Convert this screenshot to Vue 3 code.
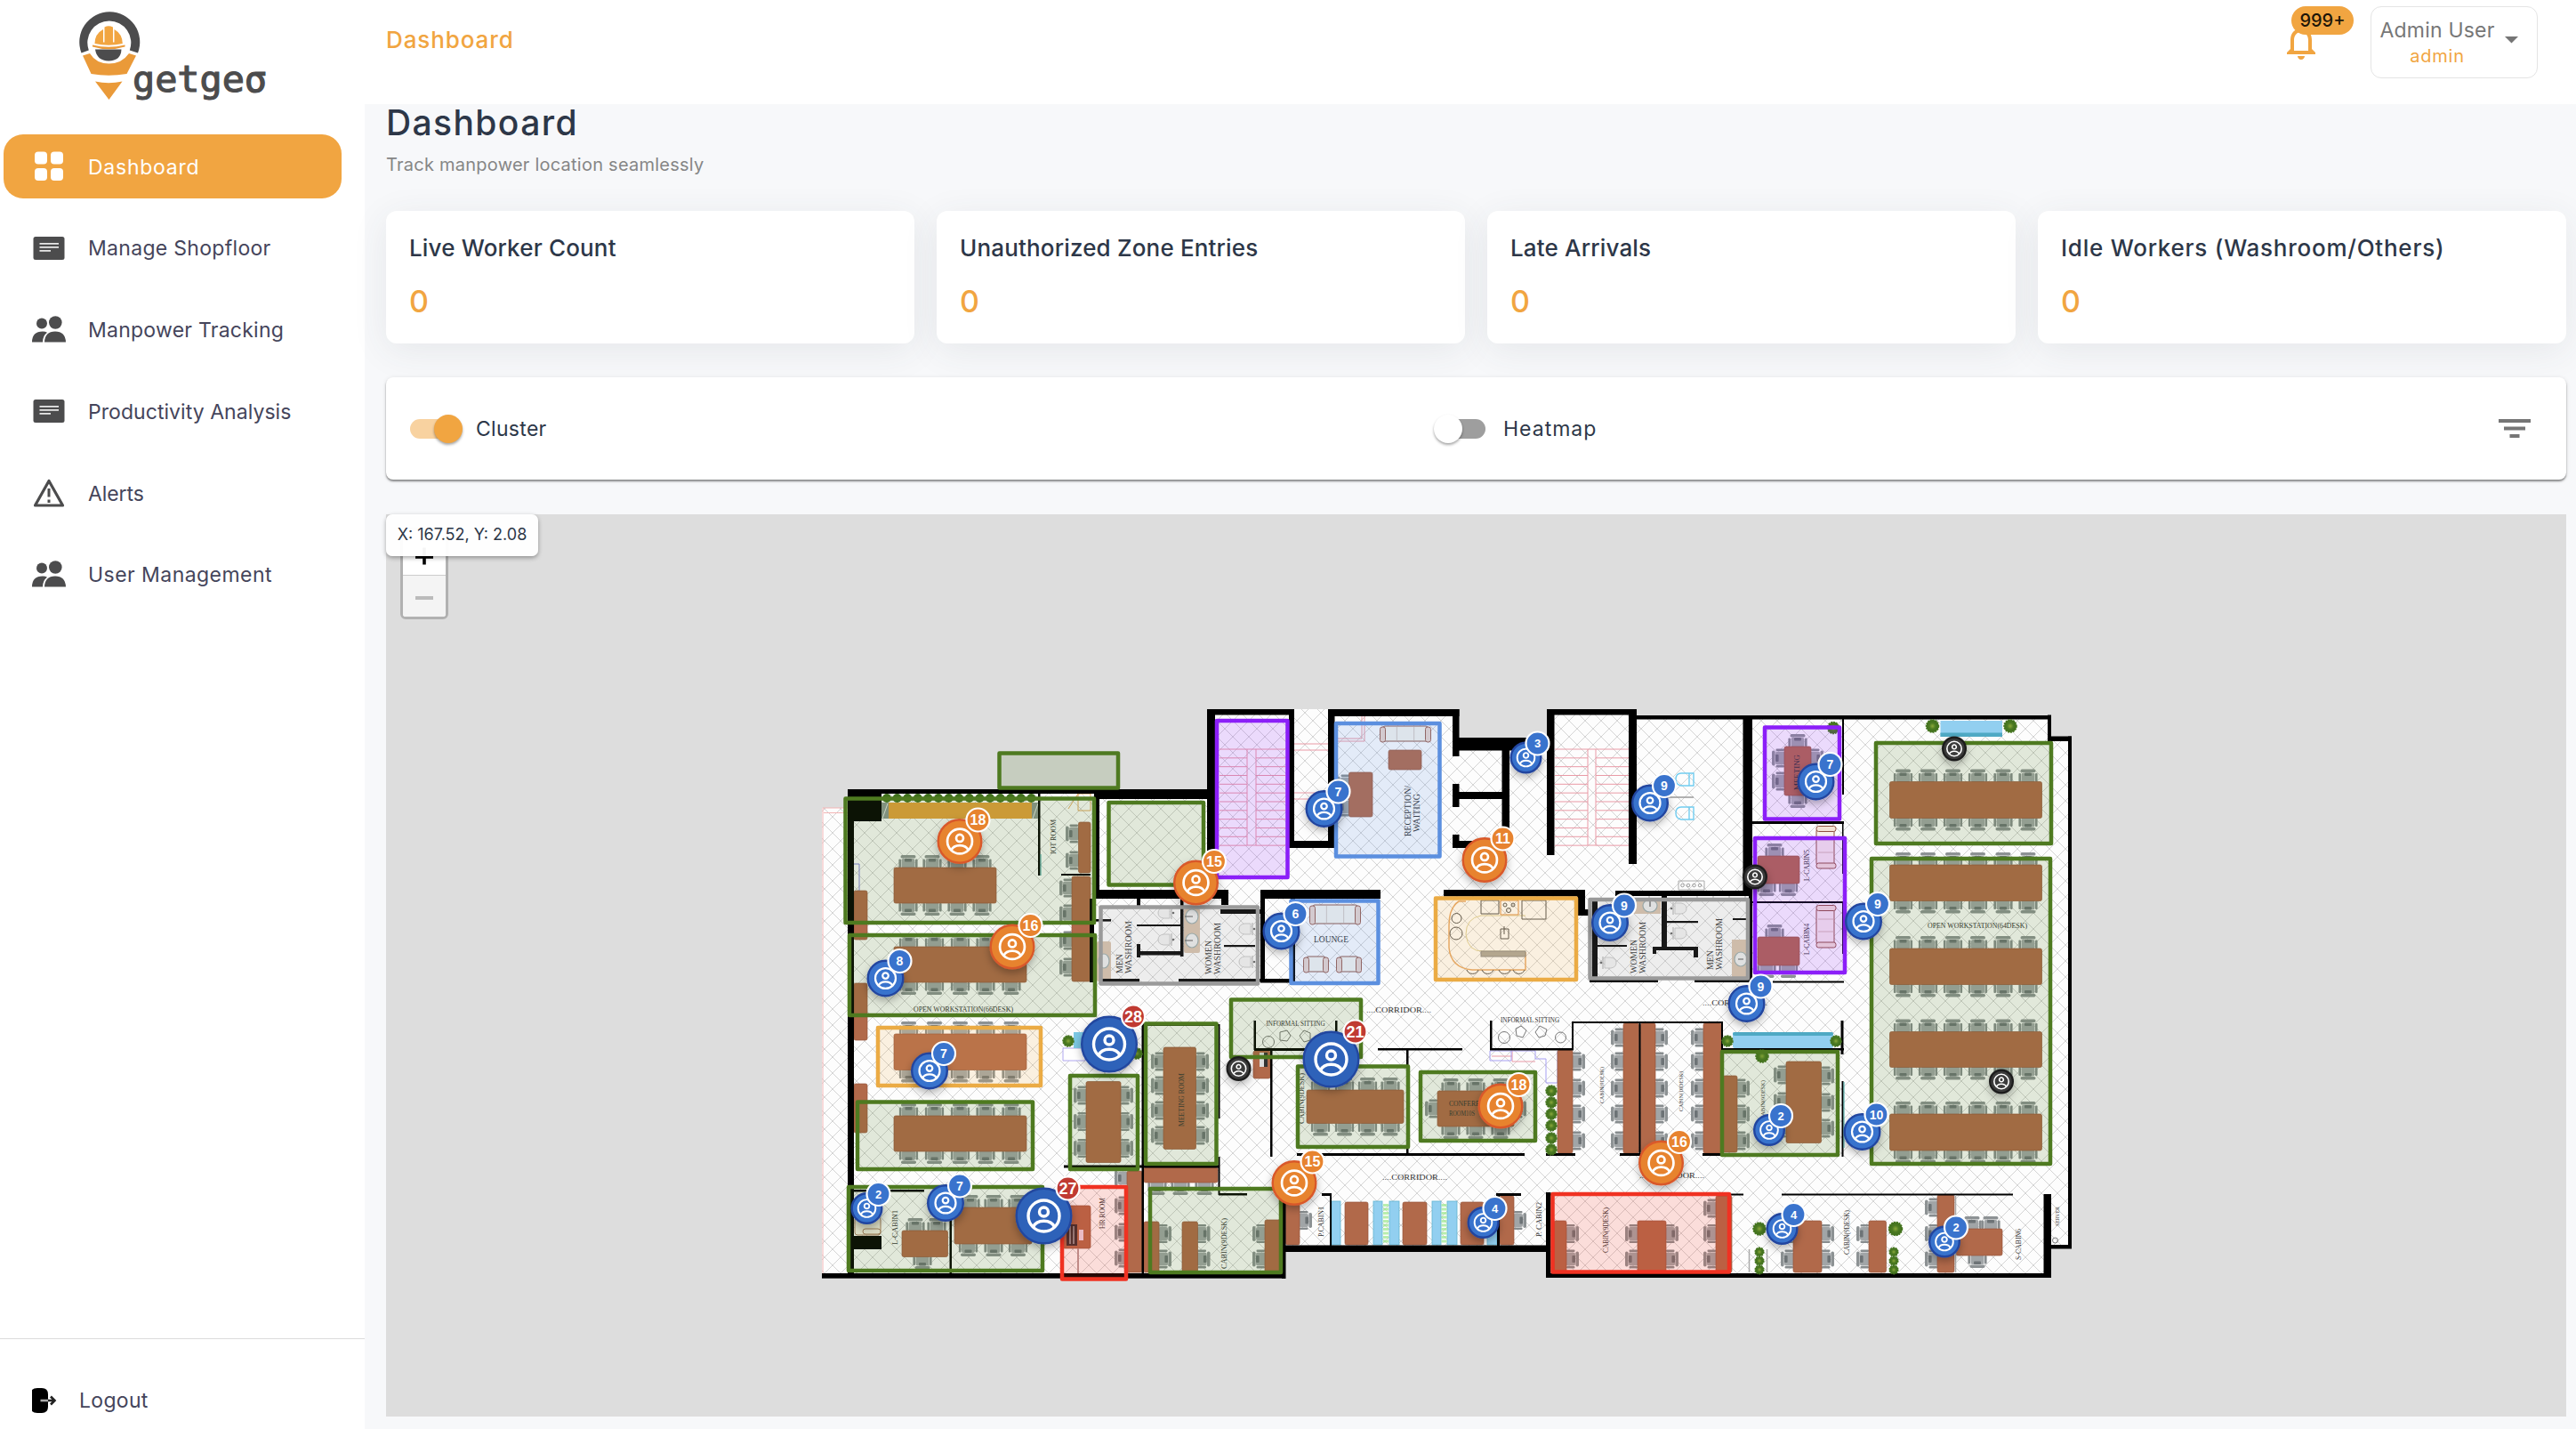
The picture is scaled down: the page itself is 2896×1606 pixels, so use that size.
<script setup>
const navItems = [
  { label: 'Dashboard', icon: 'grid', tracking: 0.75, active: true },
  { label: 'Manage Shopfloor', icon: 'note', tracking: 0.3 },
  { label: 'Manpower Tracking', icon: 'people', tracking: 0.25 },
  { label: 'Productivity Analysis', icon: 'note', tracking: 0.05 },
  { label: 'Alerts', icon: 'alert', tracking: -0.1 },
  { label: 'User Management', icon: 'people', tracking: 0.45 },
]

const stats = [
  { title: 'Live Worker Count', value: 0 },
  { title: 'Unauthorized Zone Entries', value: 0 },
  { title: 'Late Arrivals', value: 0 },
  { title: 'Idle Workers (Washroom/Others)', value: 0 },
]

// Boxes are [x1, y1, x2, y2] in map units.
const walls = [
  [953, 887, 1358, 892], [1236, 887, 1358, 898], [953, 887, 991, 923], [953, 887, 960, 1432],
  [1230, 892, 1236, 1010], [1225, 1010, 1230, 1104], [1230, 1000, 1381, 1010], [1373, 1000, 1381, 1017],
  [1357, 797, 1366, 1000], [1357, 797, 1455, 803.5], [1449, 797, 1455, 953], [1449, 945, 1501, 953],
  [1493, 797, 1500.5, 953], [1493, 797, 1640.5, 805], [1633, 797, 1640.5, 850], [1633, 829, 1740, 843.5],
  [1688.5, 829, 1697, 953], [1633, 881, 1640.5, 907], [1640, 890, 1690, 898], [1633, 938, 1640.5, 953],
  [1633, 945, 1697, 953], [1417, 1000, 1552, 1010], [1417, 1000, 1422, 1104], [1417, 1100, 1456, 1104.5],
  [1451, 1010, 1456, 1104], [1623, 1000, 1782, 1007.5], [1773, 1000, 1782, 1029], [1773, 1022, 1787, 1029],
  [1739, 797, 1747.5, 961], [1739, 797, 1840, 803.5], [1831, 797, 1840, 971], [1840, 804, 2306, 808.5],
  [1959.5, 804, 1970, 1007], [1966, 1000, 1970, 1104], [1816, 1001, 1966, 1007], [1787, 1101, 1864, 1104],
  [1905, 1101, 1969, 1104], [1790, 1010, 1796, 1098], [1868, 1007, 1874, 1066], [1858, 1064, 1909, 1068],
  [1858, 1064, 1862, 1072], [1904, 1064, 1909, 1076], [1874, 1035, 1909, 1037.2], [1948, 1032, 1966, 1034],
  [1796, 1062, 1829, 1064], [1230, 1033, 1249, 1035.6], [1278, 1039, 1327, 1041], [1327, 1010, 1330.5, 1075],
  [1278, 1069, 1330, 1073.5], [1278, 1061, 1282, 1076], [1278, 1010, 1282, 1018], [1236, 1100, 1281, 1103.5],
  [1325, 1100, 1420, 1103.5], [1372, 1022, 1417, 1027], [1376, 1062, 1411, 1064.2],
  [1970, 923, 2073, 926], [1970, 1013, 2072, 1015], [2071, 808, 2073, 893], [2071, 925, 2072.5, 982],
  [2071, 1014, 2072.5, 1072], [1993, 1102.5, 2073, 1104.5], [2302, 803.5, 2306, 832], [2302, 827.5, 2329, 833],
  [2325, 827.5, 2329, 1403], [2306, 1399, 2329, 1403.5], [2297.5, 1342, 2306, 1436], [1738, 1431, 2306, 1436],
  [1738, 1340, 1743.5, 1436], [1445, 1399.5, 1738, 1407], [1441, 1345, 1445.5, 1437], [924, 1431, 1445, 1436.7],
  [1283.5, 1150, 1286, 1432], [1196, 1309.5, 1371, 1312.5], [1369.5, 1151, 1371.5, 1257], [1289, 1151, 1371, 1153],
  [1369.5, 1300, 1371.5, 1343], [1370, 1341, 1402, 1343.5], [959, 1337, 1039, 1339.5], [1067.5, 1338, 1070, 1432],
  [1167, 892, 1169.5, 984], [1193, 982, 1226, 984], [1409.5, 1147, 1412, 1180], [1410, 1178, 1503, 1181],
  [1501, 1147, 1503.5, 1180], [1428, 1180, 1430.5, 1300], [1549, 1178, 1644, 1180.5], [1581, 1180, 1583.5, 1298],
  [1458, 1296, 1714, 1299], [1675, 1147, 1677.5, 1180], [1675, 1178, 1769, 1180.5], [1767, 1148, 1769, 1180],
  [1767, 1148, 1937, 1150], [1935, 1148, 1937, 1180], [1937, 1178, 2073, 1180.5], [2069.5, 1147, 2072.5, 1185],
  [1842.5, 1149, 1844.5, 1297], [1738, 1296, 1771, 1299], [1821, 1296, 1845, 1299], [1914, 1296, 1937, 1299],
  [2070.5, 1215, 2072.5, 1300], [1495, 1342, 1497, 1400], [1486, 1341, 1497, 1344], [1683, 1342, 1686, 1400],
  [1682, 1341, 1710, 1344], [1743, 1341.5, 1960, 1343.5], [2003, 1341.5, 2263, 1343.5], [957, 1389, 991, 1404],
]

const tables = [
  [1005, 975, 1120, 1015], [1005, 1064, 1154, 1104], [1005, 1162, 1154, 1202.5], [1005, 1254, 1154, 1294],
  [1308, 1177, 1344.5, 1291.5], [1221, 1215.5, 1260, 1306.5], [1014, 1383, 1065.5, 1412.5], [1073, 1357, 1160, 1398],
  [960, 1001, 975, 1056], [960, 1105, 975, 1169], [960, 1218, 975, 1273], [1212.5, 924, 1226, 981],
  [1205, 985, 1226, 1103], [1195, 1355, 1226, 1403], [1267, 1316, 1284, 1430], [1286, 1312, 1369, 1329],
  [1286, 1373, 1303, 1430], [1329, 1373, 1346.5, 1430], [1422, 1371, 1441, 1430], [1469, 1225, 1578, 1262.5],
  [1616, 1226, 1702, 1266], [1409, 1181, 1428, 1212], [1445.5, 1345, 1461, 1399], [1512, 1351, 1538, 1399],
  [1577, 1351, 1604, 1399], [1642, 1351, 1668, 1399], [1686, 1344, 1702, 1399], [1751, 1180, 1768, 1296],
  [1825, 1150, 1842.5, 1296], [1844.5, 1150, 1861, 1296], [1915, 1150, 1935, 1296], [1937, 1209, 1953, 1295],
  [2008, 1193, 2047.5, 1284.5], [1747, 1372, 1761, 1430], [1841, 1372, 1873, 1430], [1929, 1344, 1947, 1430],
  [2016, 1372, 2048, 1430], [2101, 1372, 2120.5, 1430], [2178, 1343, 2197, 1430], [2199, 1381, 2251, 1411],
  [1516.5, 868, 1543, 918], [1561, 843, 1598, 865], [2124.5, 878.5, 2295.5, 919.5], [2124.5, 972, 2295.5, 1012.5],
  [2124.5, 1066, 2295.5, 1106.5], [2124.5, 1159.5, 2295.5, 1199.5], [2124.5, 1252, 2295.5, 1293],
  [2006, 839, 2036, 894], [1976, 962, 2023, 993], [1976, 1053, 2023, 1085],
]

// Chair rows: seats touch the table edge and the back points away from it.
const top = (y, xs) => xs.map((x) => ({ x, y, r: 0 }))
const bottom = (y, xs) => xs.map((x) => ({ x, y, r: 180 }))
const left = (x, ys) => ys.map((y) => ({ x, y, r: 270 }))
const right = (x, ys) => ys.map((y) => ({ x, y, r: 90 }))
const five = [1021.5, 1050.5, 1079.5, 1108, 1137]
const six = [2139.5, 2167.5, 2195.5, 2223.5, 2252, 2280]
const desk5 = [1166, 1193, 1223, 1252, 1282]
const pair = [1386.5, 1415]
const chairs = [
  ...top(975, [1021, 1048, 1076, 1104]), ...bottom(1015, [1021, 1048, 1076, 1104]),
  ...[1064, 1162, 1254].flatMap((y) => top(y, five)),
  ...[1104, 1202.5, 1294].flatMap((y) => bottom(y, five)),
  ...[878.5, 972, 1066, 1159.5, 1252].flatMap((y) => top(y, six)),
  ...[919.5, 1012.5, 1106.5, 1199.5, 1293].flatMap((y) => bottom(y, six)),
  ...left(1308, [1193, 1220, 1248, 1276]), ...right(1345, [1193, 1220, 1248, 1276]),
  ...left(1221, [1231, 1260.5, 1290.5]), ...right(1260, [1231, 1260.5, 1290.5]),
  ...left(1212, [937, 967]), ...left(1205, [998, 1027, 1057, 1087]),
  ...left(1267, [1324, 1355, 1385, 1414]), ...bottom(1329, [1301, 1327, 1354]),
  ...right(1303, pair), ...right(1346.5, pair), ...left(1422, pair),
  ...top(1383, [1029, 1053]), ...bottom(1412.5, [1037]),
  ...top(1357, [1091, 1117, 1144]), ...bottom(1398, [1088.5, 1117, 1144.5]),
  ...top(1225, [1484.5, 1511.5, 1537.5, 1563]), ...bottom(1262.5, [1484.5, 1511.5, 1537.5, 1563]),
  ...top(1226, [1631, 1659, 1687]), ...bottom(1266, [1631, 1659, 1687]),
  ...left(1616, [1246]), ...right(1702, [1246]), ...right(1461, [1371.5]), ...right(1702, [1371.5]),
  ...right(1768, [1193, 1223, 1252, 1282]), ...left(1825, desk5), ...right(1861, desk5), ...left(1915, desk5),
  ...right(1953, [1223, 1252, 1282]), ...left(2008, [1208, 1238, 1268]), ...right(2048, [1209, 1239, 1268]),
  ...right(1761, pair), ...left(1841, pair), ...right(1873, pair), ...left(1929, [1358, ...pair]),
  ...left(2016, pair), ...right(2048, pair), ...left(2101, pair), ...left(2178, [1357, ...pair]),
  ...top(1381, [2217, 2238]), ...bottom(1411, [2223]),
  ...left(2006, [852, 878]), ...right(2036, [852, 878]), ...top(839, [2021]), ...bottom(894, [2021]),
  ...top(962, [1995]), ...bottom(993, [1986, 2010.5]), ...top(1053, [1995]), ...bottom(1085, [1986, 2010.5]),
  ...left(1517, [881, 907]),
]

const G = '#4e7a20'
const zones = [
  { c: G, b: [1121.5, 844.5, 1259, 887.5] }, { c: G, b: [948.5, 895.5, 1232, 1039] },
  { c: G, b: [953, 1049, 1233, 1143] }, { c: G, b: [1244.5, 900, 1355, 996.5] },
  { c: G, b: [962, 1236.5, 1163, 1316] }, { c: G, b: [952, 1332, 1174, 1430] },
  { c: G, b: [1201, 1207, 1281, 1316] }, { c: G, b: [1286, 1148.5, 1369.5, 1310] },
  { c: G, b: [1291, 1334, 1442, 1432] }, { c: G, b: [1382, 1121.5, 1532, 1190] },
  { c: G, b: [1457, 1196.5, 1585, 1291] }, { c: G, b: [1595, 1203, 1728, 1284] },
  { c: G, b: [2107, 833, 2308, 950] }, { c: G, b: [2102, 963, 2307, 1310] },
  { c: G, b: [1934, 1180, 2068, 1300] },
  { c: '#ebab44', b: [985, 1153, 1172, 1222] }, { c: '#ebab44', b: [1612, 1007.5, 1774, 1103] },
  { c: '#f03222', b: [1192, 1332, 1268, 1439.5] }, { c: '#f03222', b: [1743.5, 1340, 1946, 1431.5] },
  { c: '#8b1ff8', b: [1366, 808, 1449.5, 988] }, { c: '#8b1ff8', b: [1982, 815.5, 2070, 922.5] },
  { c: '#8b1ff8', b: [1971, 940, 2076, 1095] },
  { c: '#5b8fdf', b: [1500, 811, 1620.5, 964.5] }, { c: '#5b8fdf', b: [1449.5, 1010.5, 1551.5, 1107] },
  { c: '#9a9a9a', b: [1235.5, 1017.5, 1416, 1107.5] }, { c: '#9a9a9a', b: [1785.5, 1009, 1967, 1101.5] },
]

const labels = [
  { t: 'IOT ROOM', x: 1187, y: 960, w: 39, v: 1 }, { t: 'OPEN WORKSTATION(66DESK)', x: 1027, y: 1137, w: 112 },
  { t: 'MEN', x: 1262, y: 1094, w: 22, v: 1, s: 10 }, { t: 'WASHROOM', x: 1272, y: 1094, w: 59, v: 1, s: 10 },
  { t: 'WOMEN', x: 1362, y: 1095, w: 38, v: 1, s: 10 }, { t: 'WASHROOM', x: 1371.5, y: 1095, w: 58, v: 1, s: 10 },
  { t: 'L-CABIN1', x: 1009, y: 1399, w: 39, v: 1 }, { t: 'HR ROOM', x: 1242, y: 1381, w: 35, v: 1 },
  { t: 'MEETING ROOM', x: 1331, y: 1266, w: 60, v: 1 }, { t: 'CABIN(9DESK)', x: 1379, y: 1426, w: 57, v: 1 },
  { t: 'CABIN(9DESK)', x: 1466, y: 1263, w: 57, v: 1 }, { t: 'RECEPTION/', x: 1586, y: 940, w: 57, v: 1, s: 10 },
  { t: 'WAITING', x: 1596, y: 935, w: 43, v: 1, s: 10 }, { t: 'LOUNGE', x: 1477, y: 1059, w: 39, s: 10 },
  { t: '....CORRIDOR....', x: 1536, y: 1138, w: 73 }, { t: '....CORRIDOR....', x: 1554, y: 1326, w: 73 },
  { t: '....CORRIDOR....', x: 1914, y: 1129.5, w: 73 }, { t: '....CORRIDOR....', x: 1843, y: 1324, w: 73 },
  { t: 'INFORMAL SITTING', x: 1423.5, y: 1153, w: 66, s: 7.5 }, { t: 'INFORMAL SITTING', x: 1687, y: 1149, w: 66, s: 7.5 },
  { t: 'CONFERENCE', x: 1629, y: 1243, w: 50 }, { t: 'ROOM10S', x: 1629, y: 1253.5, w: 29 },
  { t: 'P.CABIN1', x: 1488, y: 1390, w: 34, v: 1 }, { t: 'P. CABIN2', x: 1733, y: 1390, w: 39, v: 1 },
  { t: 'CABIN(9DESK)', x: 1803, y: 1240, w: 41, v: 1, s: 7 }, { t: 'CABIN(10DESK)', x: 1892, y: 1249, w: 45, v: 1, s: 7 },
  { t: 'CABIN(9DESK)', x: 1984, y: 1258, w: 44, v: 1, s: 7 }, { t: 'CABIN(9DESK)', x: 1808, y: 1408, w: 51, v: 1 },
  { t: 'CABIN(9DESK)', x: 2079, y: 1410, w: 50, v: 1 }, { t: 'S-CABIN6', x: 2272, y: 1416, w: 35, v: 1 },
  { t: 'L-CABIN5', x: 2034, y: 990, w: 35, v: 1 }, { t: 'L-CABIN4', x: 2034, y: 1073, w: 35, v: 1 },
  { t: 'MEETING', x: 2023, y: 888, w: 40, v: 1 }, { t: 'SERVER', x: 2315, y: 1378, w: 22, v: 1, s: 6.5 },
  { t: 'OPEN WORKSTATION(64DESK)', x: 2167, y: 1043, w: 112 },
  { t: 'WOMEN', x: 1840, y: 1094, w: 38, v: 1, s: 10 }, { t: 'WASHROOM', x: 1849.5, y: 1094, w: 58, v: 1, s: 10 },
  { t: 'MEN', x: 1926, y: 1090, w: 22, v: 1, s: 10 }, { t: 'WASHROOM', x: 1935.5, y: 1090, w: 58, v: 1, s: 10 },
]

const plants = [
  [2172.5, 816, 7], [2260, 816, 7], [2061, 818, 6.5], [1942, 1170, 6], [2064, 1170, 6], [1981, 1187, 7],
  ...[1226, 1239, 1252, 1265, 1279, 1292].map((y) => [1744, y, 6]),
  [1978, 1381, 7], [2131, 1381, 7.5], [1201, 1170, 6], [1278, 1184, 6],
  ...[1407, 1417, 1427].flatMap((y) => [[1978, y, 4.8], [2129, y, 4.8]]),
]
const hedge = Array.from({ length: 15 }, (_, i) => [997 + i * 11.6, 897, 5])
const stairs = Array.from({ length: 12 }, (_, i) => 842 + i * 9.83)
const sofaBlocks = [[1497, 1507], [1544, 1554], [1562, 1573], [1610, 1620], [1627, 1638], [1672, 1683]]
const sofas = [
  { x: 1551, y: 815, w: 58, h: 20, n: 3 }, { x: 1472, y: 1016, w: 58, h: 24, n: 3 },
  { x: 1465, y: 1074, w: 29, h: 20, n: 1 }, { x: 1502, y: 1074, w: 29, h: 20, n: 1 },
]
const uprightSofas = [[2041, 928], [2041, 1017]]

const kinds = {
  xl: { r: 32, fill: '#2f62b9', ring: '#23479f', badge: '#c03a32', dx: 27, dy: -31, fs: 18 },
  lg: { r: 25.5, fill: '#e7832f', ring: '#d9592a', badge: '#e7832f', dx: 20.5, dy: -24, fs: 16 },
  md: { r: 21, fill: '#3973cd', ring: '#21459f', badge: '#3973cd', dx: 16, dy: -19.5, fs: 14 },
  sm: { r: 18, fill: '#3973cd', ring: '#21459f', badge: '#3973cd', dx: 13, dy: -16, fs: 13 },
  xs: { r: 14, fill: '#3b3b3b', ring: '#1f1f1f' },
}
const markers = [
  ['xs', 1392.5, 1201], ['xs', 1973, 985.5], ['xs', 2197, 841.5], ['xs', 2250, 1215.5],
  ['sm', 1715.5, 851.5, 3], ['md', 1488.5, 909, 7], ['md', 1855, 902.5, 9], ['md', 2041.5, 878.5, 7],
  ['lg', 1079, 945.5, 18], ['lg', 1669, 966.5, 11], ['lg', 1344.5, 992, 15],
  ['md', 1810, 1037, 9], ['md', 2095, 1035.5, 9], ['md', 1440.5, 1046.5, 6], ['lg', 1138, 1064, 16],
  ['md', 995.5, 1099.5, 8], ['md', 1963.5, 1128, 9], ['xl', 1247, 1173.5, 28], ['xl', 1496.5, 1190.5, 21],
  ['md', 1045, 1203.5, 7], ['lg', 1687, 1243, 18], ['sm', 1989, 1270, 2], ['md', 2093.5, 1272, 10],
  ['lg', 1867.5, 1307, 16], ['lg', 1455, 1329.5, 15], ['md', 1063, 1352, 7], ['sm', 974.5, 1358, 2],
  ['xl', 1173.5, 1366.5, 27], ['sm', 1667.5, 1374, 4], ['sm', 2003.5, 1381, 4], ['sm', 2186, 1395.5, 2],
].map(([kind, x, y, count]) => ({ ...kinds[kind], x, y, count }))
</script>

<template>
  <div class="app">
    <aside class="sidebar">
      <svg class="logo" width="220" height="110" viewBox="84 10 220 110" role="img" aria-label="getgeo">
        <path d="M91.500 59.500A34 34 0 1 1 155 59.500L145.800 56.500A24.500 24.500 0 1 0 99.800 56.500Z" fill="#4c4c4d" />
        <path d="M93 62.500L101 60Q108 71.500 122.500 71.500Q137 71.500 145 60L153 62.500L142.500 83Q122 86.500 102.500 83Z" fill="#ea9a39" />
        <path d="M107 91.500Q122 95 137.500 91.500L122.500 112Z" fill="#ea9a39" />
        <path d="M107 55.500H136.500Q136 68.300 122 68.500Q109 68.300 107 55.500Z" fill="#4c4c4d" />
        <path d="M104 50.500Q122 55 140.500 50.500V52.500Q122 58 104 52.500Z" fill="#ea9a39" />
        <path d="M106.500 49Q106.500 38 116 33V47.500H117.500V30.500Q122 28 127 30.500V47.500H128.500V33Q137.500 38 137.800 49Q122 52.500 106.500 49Z" fill="#f1a541" />
        <text x="149" y="103" textLength="151" lengthAdjust="spacingAndGlyphs" class="logo-text">getgeσ</text>
      </svg>

      <nav class="nav">
        <a v-for="item in navItems" :key="item.label" class="nav-item" :class="{ active: item.active }">
          <svg class="nav-icon" width="40" height="40" viewBox="0 0 40 40">
            <g v-if="item.icon === 'grid'" fill="#fff">
              <rect x="4" y="3.500" width="14" height="14" rx="4" /><rect x="22" y="3.500" width="14" height="14" rx="4" />
              <rect x="4" y="22" width="14" height="14" rx="4" /><rect x="22" y="22" width="14" height="14" rx="4" />
            </g>
            <g v-else-if="item.icon === 'note'">
              <rect x="2.500" y="7" width="35" height="26" rx="2.500" fill="#4c4c4d" />
              <path d="M9.500 14.800H31M9.500 18.800H31M9.500 22.800H22" stroke="#e8e8e8" stroke-width="1.800" />
            </g>
            <g v-else-if="item.icon === 'people'" fill="#4c4c4d">
              <circle cx="12" cy="12.500" r="6" /><circle cx="27.300" cy="11.500" r="7.300" />
              <path d="M1 33.500Q1 21.500 13 21.500Q16 21.500 18 22.800Q13 26.500 13 33.500Z" />
              <path d="M15 33.500Q15.500 21.500 27 21.500Q38.500 21.500 39 33.500Z" />
            </g>
            <g v-else fill="none" stroke="#4c4c4d">
              <path d="M20 6.500L35.500 34H4.500Z" stroke-width="3.200" stroke-linejoin="round" />
              <path d="M20 15V24.500M20 27.500V31" stroke-width="3" />
            </g>
          </svg>
          <span :style="{ letterSpacing: item.tracking + 'px' }">{{ item.label }}</span>
        </a>
      </nav>

      <div class="logout">
        <svg width="28" height="30" viewBox="0 0 28 30">
          <path d="M0 3Q2 1 6 1H11Q18 1 18 8V22Q18 29 11 29H6Q2 29 0 27Z" fill="#000" />
          <path d="M9.500 15H19" stroke="#aaa" stroke-width="2.600" />
          <path d="M18 15H25M21 10.500L25.500 15L21 19.500" fill="none" stroke="#222" stroke-width="2.600" />
        </svg>
        <span>Logout</span>
      </div>
    </aside>

    <div class="page">
      <header class="topbar">
        <span class="crumb">Dashboard</span>
        <div class="top-actions">
          <div class="bell">
            <svg width="48" height="48" viewBox="0 0 24 24" fill="#f1a541">
              <path d="M12 22c1.100 0 2-.9 2-2h-4c0 1.100.9 2 2 2zm6-6v-5c0-3.070-1.630-5.640-4.500-6.320V4c0-.83-.67-1.500-1.500-1.500s-1.500.67-1.500 1.500v.68C7.640 5.360 6 7.920 6 11v5l-2 2v1h16v-1l-2-2zm-2 1H8v-6c0-2.480 1.510-4.500 4-4.500s4 2.020 4 4.500v6z" />
            </svg>
            <span class="badge">999+</span>
          </div>
          <div class="user">
            <div class="user-text"><span class="user-name">Admin User</span><span class="user-role">admin</span></div>
            <svg width="15" height="8" viewBox="0 0 15 8"><path d="M0 0H15L7.500 7.500Z" fill="#757575" /></svg>
          </div>
        </div>
      </header>

      <main class="content">
        <h1>Dashboard</h1>
        <p class="subtitle">Track manpower location seamlessly</p>

        <section class="stats">
          <article v-for="stat in stats" :key="stat.title" class="stat">
            <h2>{{ stat.title }}</h2>
            <strong>{{ stat.value }}</strong>
          </article>
        </section>

        <section class="controls">
          <label class="control"><span class="switch on"><i></i></span><span class="switch-label">Cluster</span></label>
          <label class="control"><span class="switch"><i></i></span><span class="switch-label">Heatmap</span></label>
          <svg class="filter" width="36" height="22" viewBox="0 0 36 22" fill="#757575">
            <rect width="36" height="4" /><rect x="6" y="8.500" width="24" height="4" /><rect x="12.500" y="17" width="11" height="4" />
          </svg>
        </section>

        <section class="map">
          <svg class="plan" width="2451" height="1014" viewBox="434 578 2451 1014">
            <defs>
              <pattern id="tiles" width="18" height="18" patternUnits="userSpaceOnUse">
                <path d="M0 0L18 18M18 0L0 18" stroke="#d4d4d4" stroke-width="1" />
              </pattern>
              <symbol id="chair" viewBox="-11 -14 22 14" overflow="visible">
                <rect x="-7.500" y="-10" width="15" height="11" rx="2" fill="#a1a5a7" />
                <rect x="-8.500" y="-14" width="17" height="3.600" rx="1.700" fill="#8d9294" />
                <rect x="-4" y="-10" width="8" height="3.600" rx="1" fill="#6d7376" />
                <rect x="-10.600" y="-9.500" width="2.600" height="9.500" rx="1" fill="#878c8e" />
                <rect x="8" y="-9.500" width="2.600" height="9.500" rx="1" fill="#878c8e" />
              </symbol>
              <symbol id="toilet" viewBox="0 0 20 14" overflow="visible">
                <path d="M14 1H7Q1 2 1 7Q1 12 7 13H14Z" fill="#f4f4f4" stroke="#c9c9c9" />
                <path d="M16 0V14" stroke="#c4c4c4" stroke-width="1.500" /><circle cx="18" cy="7" r="1.300" fill="#666" />
              </symbol>
              <radialGradient id="leaf"><stop offset="0" stop-color="#8aa83a" /><stop offset="0.500" stop-color="#4c7a22" /><stop offset="1" stop-color="#3f6f1c" /></radialGradient>
              <filter id="drop" x="-40%" y="-40%" width="180%" height="190%">
                <feDropShadow dx="0" dy="4" stdDeviation="5" flood-color="#000" flood-opacity="0.300" />
              </filter>
            </defs>

            <g>
              <path d="M924 908H953V887H1358V797H1640V829H1739V797H1840V804H2306V828H2329V1403H2306V1436H1738V1407H1445V1436H924Z" fill="#fdfdfd" />
              <path d="M924 908H953V887H1358V797H1640V829H1739V797H1840V804H2306V828H2329V1403H2306V1436H1738V1407H1445V1436H924Z" fill="url(#tiles)" />
              <path d="M953 908H925V1432" fill="none" stroke="#f3b5b5" stroke-width="1" />
              <path d="M953 913.500H926" stroke="#f3b5b5" />
            </g>

            <g stroke="#e99aa6" stroke-width="1" fill="none">
              <path v-for="y in stairs" :key="y" :d="`M1371 ${y}H1402M1412 ${y}H1445M1748 ${y}H1785M1794 ${y}H1831`" />
              <path d="M1402 842V950M1412 842V950M1785 842V950M1794 842V950M1402 842H1412M1402 950H1412M1785 842H1794M1785 950H1794" />
              <path d="M1455 836H1493M1455 843H1493M1455 891H1493M1455 898H1493M1500 830H1531V805M1500 833H1534V805" />
              <path d="M1700 1181V1193H1726M1677 1187H1700" />
            </g>

            <g>
              <rect x="999" y="902" width="161" height="18" fill="#e3a03c" />
              <path d="M991 902H999V920H991ZM1160 902H1168V920H1160Z" fill="#8b9690" />
              <path d="M992 920L998 903M1161 920L1167 903" stroke="#e2e6e0" />
              <circle v-for="p in hedge" :key="p[0]" :cx="p[0]" :cy="p[1]" :r="p[2]" fill="#3f6f1c" />
              <path d="M1212 892H1226V911H1212ZM1212 892L1201 909" fill="none" stroke="#e0a860" />
              <path d="M960 971H966V1001" fill="none" stroke="#8080d8" />
              <path d="M1195 1178H1220V1192H1195Z" fill="#fff" stroke="#b0a8f0" />
              <rect x="1207" y="1160" width="12" height="18" fill="#7cc8e4" />
              <g v-for="s in sofaBlocks" :key="s[0]">
                <rect :x="s[0]" y="1350" :width="s[1] - s[0]" height="49" fill="#92cff0" stroke="#62b3d0" stroke-width="0.800" />
              </g>
              <path d="M1558 1353V1397M1623.500 1353V1397" stroke="#9be88c" stroke-width="6" stroke-dasharray="3 1.500" opacity="0.700" />
              <rect x="2181.500" y="810" width="69.500" height="18" fill="#92cff0" /><rect x="2181.500" y="823.500" width="69.500" height="4.500" fill="#4fa9c4" />
              <rect x="1948" y="1160" width="113" height="18" rx="2" fill="#92cff0" /><rect x="1948" y="1160" width="113" height="4" rx="2" fill="#4fa9c4" />
              <path d="M1904 869V883H1890Q1884 882 1884 876Q1884 869 1890 869ZM1899 869V883M1904 907V921H1890Q1884 920 1884 914Q1884 907 1890 907ZM1899 907V921" fill="none" stroke="#72cdf0" stroke-width="1.400" />
              <path d="M1874 896H1904" stroke="#999" stroke-width="1.500" />
              <path d="M1887 990H1916V1000H1887Z" fill="none" stroke="#aaa" />
              <circle v-for="i in 4" :key="i" :cx="1885 + i * 6.500" cy="995" r="1.800" fill="none" stroke="#888" stroke-width="0.800" />
              <path d="M1675 1181H1726V1190H1738V1217H1751V1181M1699 1181V1192H1675V1181" fill="none" stroke="#a7a0f3" />
            </g>

            <g>
              <use v-for="(c, i) in chairs" :key="i" href="#chair" x="-11" y="-14" width="22" height="14" :transform="`translate(${c.x} ${c.y}) rotate(${c.r})`" />
              <rect v-for="(t, i) in tables" :key="'t' + i" :x="t[0]" :y="t[1]" :width="t[2] - t[0]" :height="t[3] - t[1]" rx="2" fill="#b1694a" stroke="#95553b" stroke-width="0.700" />
            </g>

            <g>
              <g v-for="s in sofas" :key="s.x" :transform="`translate(${s.x} ${s.y})`">
                <rect x="4" y="1" :width="s.w - 8" :height="s.h - 3" rx="2" fill="#f6f5ee" stroke="#8f5748" />
                <path v-if="s.n === 3" :d="`M${s.w / 3} 2V${s.h - 3}M${s.w * 2 / 3} 2V${s.h - 3}`" stroke="#c9bdb4" stroke-width="0.800" />
                <rect x="0.500" y="2" width="6" :height="s.h - 3" rx="2.500" fill="#ead6cd" stroke="#9c6050" />
                <rect :x="s.w - 6.500" y="2" width="6" :height="s.h - 3" rx="2.500" fill="#ead6cd" stroke="#9c6050" />
              </g>
              <g v-for="s in uprightSofas" :key="s[1]" :transform="`translate(${s[0]} ${s[1]})`">
                <rect x="1" y="4" width="20" height="40" rx="2" fill="#f8eeea" stroke="#8f5040" />
                <path d="M3 16H21M3 30H21" stroke="#c9aaa4" stroke-width="0.800" />
                <rect x="1" y="0.500" width="22" height="6" rx="2.500" fill="#f3e3d5" stroke="#8f5040" />
                <rect x="1" y="42" width="22" height="6" rx="2.500" fill="#f3e3d5" stroke="#8f5040" />
              </g>
              <rect x="961" y="1368" width="29" height="20" rx="3" fill="#f6efe2" stroke="#a87c60" />
              <rect x="970" y="1381" width="20" height="6" rx="3" fill="#f6efe2" stroke="#a87c60" />
            </g>

            <g>
              <rect x="1331" y="1021" width="18" height="50" rx="2" fill="#d8c3ae" /><rect x="1233" y="1058" width="16" height="45" rx="2" fill="#d8c3ae" />
              <rect x="1834" y="1010" width="33" height="17" fill="#d8c3ae" /><rect x="1947" y="1056" width="17" height="42" fill="#d8c3ae" />
              <g fill="#eceeee" stroke="#9aa" stroke-width="1.200">
                <ellipse cx="1340" cy="1030" rx="7" ry="8" /><ellipse cx="1340" cy="1057" rx="7" ry="8" /><ellipse cx="1241" cy="1080" rx="6" ry="8" />
                <ellipse cx="1855" cy="1018" rx="8" ry="7" /><ellipse cx="1957" cy="1078" rx="7" ry="8" />
              </g>
              <path d="M1332 1030H1341M1332 1057H1341M1855 1012V1019M1960 1078H1954" stroke="#555" stroke-width="1.200" />
              <use href="#toilet" x="1301" y="1019" width="20" height="14" /><use href="#toilet" x="1301" y="1049" width="20" height="14" />
              <use href="#toilet" x="1392" y="1037" width="20" height="14" /><use href="#toilet" x="1392" y="1074" width="20" height="14" />
              <g transform="rotate(180 1887 1035)"><use href="#toilet" x="1877" y="1014" width="20" height="14" /><use href="#toilet" x="1877" y="1042" width="20" height="14" /></g>
              <g transform="rotate(180 1808 1082)"><use href="#toilet" x="1798" y="1075" width="20" height="14" /></g>
            </g>

            <g fill="none" stroke="#4d4d4d" stroke-width="1">
              <path d="M1648 1013H1640Q1629 1020 1629 1040V1065Q1631 1088 1655 1090H1715V1070" stroke="#e5a767" stroke-width="1.500" />
              <path d="M1715 1029H1665Q1648 1032 1648 1050Q1650 1070 1668 1069H1715" stroke="#dcd09a" />
              <path d="M1665 1012H1685V1027H1665ZM1711 1012H1738V1033H1711Z" />
              <path d="M1687 1012H1707V1028H1687Z" stroke="#dd8b40" />
              <circle cx="1692" cy="1017" r="2" /><circle cx="1701" cy="1017" r="2" /><circle cx="1696" cy="1023" r="2.500" />
              <circle cx="1637.500" cy="1032" r="5.500" /><circle cx="1637" cy="1049" r="7" /><path d="M1687 1044H1696V1055H1687ZM1691 1041V1050" />
              <rect x="1665" y="1069" width="50" height="6" fill="#a9a59c" stroke="#888" />
              <path d="M1649 1090A7 7 0 0 0 1662 1090M1666 1090A7 7 0 0 0 1679 1090M1685 1090A7 7 0 0 0 1698 1090M1701 1090A7 7 0 0 0 1714 1090" />
              <g stroke="#777">
                <circle cx="1426" cy="1171" r="6.500" /><path d="M1439 1160L1447 1158L1451 1164L1447 1170L1439 1169ZM1461 1164L1466 1158L1473 1161V1169L1466 1171Z" />
                <circle cx="1691" cy="1166" r="6.500" /><path d="M1704 1156L1710 1153L1716 1158L1712 1166L1705 1164ZM1726 1160L1731 1153L1739 1157L1737 1164L1730 1166Z" />
                <circle cx="1754.500" cy="1166" r="6" /><circle cx="2310.500" cy="1394" r="3" />
              </g>
            </g>

            <g fill="#000"><rect v-for="(w, i) in walls" :key="i" :x="w[0]" :y="w[1]" :width="w[2] - w[0]" :height="w[3] - w[1]" /></g>
            <path d="M1170 960V984M2073 1216V1290" stroke="#3fa6a0" stroke-width="1" />
            <g>
              <rect x="1199" y="1376" width="12" height="24" fill="#3a3030" /><path d="M1203 1378V1398M1207 1378V1398" stroke="#ddd" /><rect x="1213" y="1382" width="5" height="12" fill="#e9d5e5" />
              <rect x="1416" y="1183" width="5" height="16" fill="#ddd" /><rect x="1421" y="1183" width="4" height="16" fill="#333" />
              <path d="M1212 1403V1431" stroke="#b79a9a" stroke-width="2" />
              <path d="M1966.500 1404V1430M1986.500 1404V1430M2198.500 1343V1430" stroke="#aaa" stroke-width="1.500" />
            </g>
            <circle v-for="(p, i) in plants" :key="i" :cx="p[0]" :cy="p[1]" :r="p[2]" fill="url(#leaf)" stroke="#45751f" stroke-width="1.500" stroke-dasharray="2 1" />

            <g class="labels">
              <text v-for="(l, i) in labels" :key="i" :transform="`translate(${l.x} ${l.y}) rotate(${l.v ? -90 : 0})`" :font-size="l.s || 8.5" :textLength="l.w" lengthAdjust="spacingAndGlyphs">{{ l.t }}</text>
            </g>

            <rect v-for="(z, i) in zones" :key="i" :x="z.b[0] + 2" :y="z.b[1] + 2" :width="z.b[2] - z.b[0] - 4" :height="z.b[3] - z.b[1] - 4" :fill="z.c" fill-opacity="0.155" :stroke="z.c" stroke-width="4.500" stroke-linejoin="round" />

            <g v-for="(m, i) in markers" :key="i" :transform="`translate(${m.x} ${m.y})`">
              <circle :r="m.r - 1.2" :fill="m.fill" :stroke="m.ring" stroke-width="2.400" filter="url(#drop)" />
              <g :transform="`scale(${(m.count ? m.r : 15) / 32})`" fill="none" stroke="#fff" stroke-width="3.400">
                <circle r="17.500" /><circle cy="-4.500" r="5" /><path d="M-12 12.500C-8 3.500 8 3.500 12 12.500" />
              </g>
              <g v-if="m.count" :transform="`translate(${m.dx} ${m.dy})`">
                <circle r="13" :fill="m.badge" stroke="#fff" stroke-width="2.200" />
                <text class="count" :font-size="m.fs" :y="m.fs * 0.36" text-anchor="middle">{{ m.count }}</text>
              </g>
            </g>
          </svg>

          <div class="zoom-control">
            <button aria-label="Zoom in"><svg width="20" height="20" viewBox="0 0 20 20"><path d="M0 11H20M10 0.500V19.500" stroke="#000" stroke-width="3.600" /></svg></button>
            <button class="disabled" aria-label="Zoom out"><svg width="20" height="20" viewBox="0 0 20 20"><path d="M0 10H20" stroke="#bbb" stroke-width="4" /></svg></button>
          </div>
          <div class="coords">X: 167.52, Y: 2.08</div>
        </section>
      </main>
    </div>
  </div>
</template>

<style>
body { margin: 0; background: #f7f8fa; }
</style>

<style scoped>
* { box-sizing: border-box; }
.app { display: flex; width: 2896px; height: 1606px; overflow: hidden; font-family: Inter, "Noto Sans", sans-serif; color: #2d3748; }
.sidebar { display: flex; flex-direction: column; width: 410px; height: 100%; flex: none; background: #fff; }
.logo { margin: 10px 0 0 84px; flex: none; }
.logo-text { font: 500 41px "DejaVu Sans Mono", monospace; fill: #4c4c4d; stroke: #4c4c4d; stroke-width: 1.2; }
.nav { display: flex; flex-direction: column; gap: 19.8px; padding: 31px 26px 0 4px; }
.nav-item { display: flex; align-items: center; gap: 24px; height: 72px; padding: 0 0 0 31px; border-radius: 22px; font-size: 23px; color: #45455b; }
.nav-item span { padding-top: 1px; }
.nav-item.active { background: #f1a541; color: #fff; }
.logout { display: flex; align-items: center; gap: 25px; height: 102px; margin-top: auto; padding: 37px 0 0 36px; border-top: 1px solid #dcdcdc; font-size: 23px; letter-spacing: 0.3px; color: #45455b; }
.page { display: flex; flex-direction: column; flex: 1; min-width: 0; background: #f7f8fa; }
.topbar { display: flex; justify-content: space-between; height: 117px; padding: 7px 43px 0 24px; background: #fff; flex: none; }
.crumb { margin-top: 21px; font-size: 26px; line-height: 33px; font-weight: 500; letter-spacing: 0.9px; color: #f1a541; }
.top-actions { display: flex; gap: 54px; }
.bell { position: relative; width: 48px; height: 48px; margin-top: 16px; }
.badge { position: absolute; left: 13px; top: -16px; width: 70px; height: 32px; border-radius: 16px; background: #f1a541; color: #1d1508; font-size: 20px; font-weight: 500; line-height: 32px; text-align: center; }
.user { display: flex; align-items: center; gap: 13px; width: 188px; height: 81px; padding-left: 10px; border: 1px solid #e4e4e4; border-radius: 12px; }
.user-text { display: flex; flex-direction: column; align-items: center; width: 128px; flex: none; white-space: nowrap; }
.user-name { font-size: 23px; line-height: 30px; letter-spacing: 0.2px; color: #777; }
.user-role { font-size: 20px; line-height: 28px; letter-spacing: 0.8px; color: #f1a541; }
.user svg { margin-top: -5px; margin-left: -1px; }
.content { display: flex; flex-direction: column; padding: 0 11px 0 24px; }
h1 { margin: 0; height: 48px; font-size: 39px; line-height: 42px; font-weight: 500; letter-spacing: 1.4px; color: #2d3748; }
.subtitle { margin: 8px 0 0; height: 28px; font-size: 20px; line-height: 25px; letter-spacing: 0.24px; color: #868686; }
.stats { display: grid; grid-template-columns: repeat(4, 1fr); gap: 25px; margin-top: 36px; }
.stat { height: 149px; padding: 26px 26px 0; border-radius: 12px; background: #fff; box-shadow: 0 8px 40px rgba(60, 70, 80, 0.09); }
.stat h2 { margin: 0; font-size: 26px; line-height: 32px; font-weight: 500; letter-spacing: 0.16px; color: #2d3748; white-space: nowrap; }
.stat:last-child h2 { letter-spacing: 0.75px; }
.stat strong { display: block; margin-top: 23px; font-size: 34px; line-height: 41px; font-weight: 500; color: #f1a541; }
.controls { position: relative; display: flex; align-items: center; height: 115px; margin-top: 38px; padding: 0 40px 0 27px; border-radius: 8px; background: #fff; box-shadow: 0 2px 2px rgba(0, 0, 0, 0.4), 0 1px 5px rgba(0, 0, 0, 0.12); }
.control { display: flex; align-items: center; width: 1150px; flex: none; gap: 20px; }
.switch { position: relative; width: 54px; height: 22px; border-radius: 11px; background: #9e9e9e; }
.switch.on { background: #f8d2a0; }
.switch i { position: absolute; top: -5px; left: -4px; width: 32px; height: 32px; border-radius: 50%; background: #fff; box-shadow: 0 2px 3px rgba(0, 0, 0, 0.35); }
.switch.on i { left: 27px; background: #f1a541; }
.switch-label { padding-top: 1px; font-size: 23px; letter-spacing: 0.3px; color: #2d3748; }
.control + .control { width: 300px; margin-left: 5px; }
.control + .control .switch-label { letter-spacing: 1px; }
.filter { margin-left: auto; }
.map { position: relative; width: 2451px; height: 1014px; margin-top: 39px; background: #ddd; }
.plan { display: block; }
.labels { font-family: "Liberation Serif", serif; fill: #333; }
.count { font-family: "Liberation Sans", Arial, sans-serif; font-weight: 700; fill: #fff; }
.zoom-control { position: absolute; left: 16px; top: 15px; display: flex; flex-direction: column; width: 54px; height: 102.5px; border: 3px solid #b1b1b1; border-radius: 6px; background: #fff; overflow: hidden; }
.zoom-control button { display: flex; flex: 1; align-items: center; justify-content: center; border: 0; border-bottom: 1px solid #ccc; padding: 9px 0 0; background: #fff; }
.zoom-control .disabled { border: 0; padding-top: 5px; background: #f4f4f4; }
.coords { position: absolute; left: 0; top: 0; width: 171px; height: 47px; border-radius: 7px; background: rgba(255, 255, 255, 0.96); box-shadow: 0 2px 5px rgba(0, 0, 0, 0.35); font-size: 18px; line-height: 46px; text-align: center; color: #2d3748; white-space: nowrap; }
</style>
